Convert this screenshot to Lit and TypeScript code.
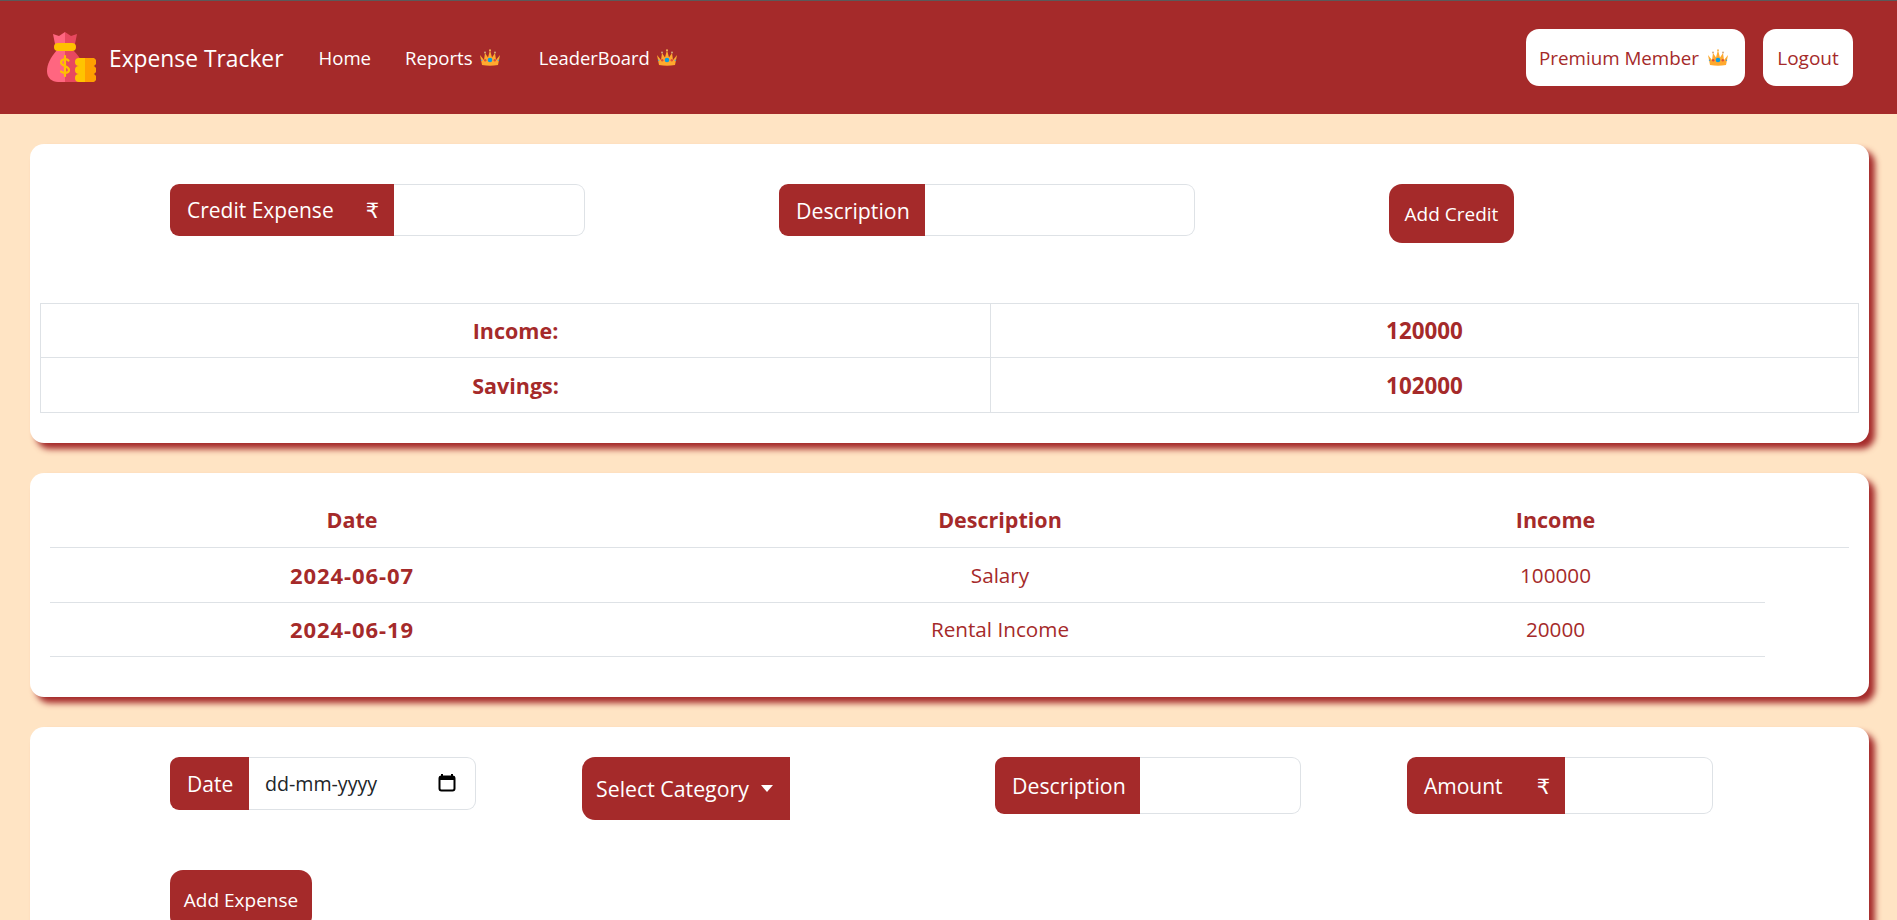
import { LitElement, html, css, svg } from "lit";
import { customElement } from "lit/decorators.js";

const crown = html`<svg class="crown" viewBox="0 0 22 17" aria-hidden="true">
  <path d="M1 6 L5 11 L6 4 L9 8.5 L11 1 L13 8.5 L16 4 L17 11 L21 6 L19 16 Q11 17.5 3 16 Z" fill="#ffa92e"/>
  <circle cx="11" cy="1.2" r="1" fill="#f5b75a"/><circle cx="6" cy="3.5" r="1" fill="#d6a878"/><circle cx="16" cy="3.5" r="1" fill="#d6a878"/>
  <circle cx="11" cy="11" r="2.3" fill="#0a9de0"/><circle cx="6.2" cy="11.2" r="1.2" fill="#e0503a"/><circle cx="15.8" cy="11.2" r="1.2" fill="#e0503a"/>
  <circle cx="2.6" cy="11.2" r=".8" fill="#4aa0c8"/><circle cx="19.4" cy="11.2" r=".8" fill="#4aa0c8"/>
</svg>`;

const logo = html`<svg class="logo" viewBox="0 0 50 50" aria-hidden="true">
  <path d="M19 0 L13 4 L7 2 L9 12 H19 Z" fill="#ff6680"/>
  <path d="M19 0 L25 4 L31 2 L29 12 H19 Z" fill="#e8485f"/>
  <path d="M19 18 H11 C4 26 1 33 1 39 C1 46 6 50 12 50 H19 Z" fill="#ff6680"/>
  <path d="M19 18 H27 C31 22 34 26 36 30 V50 H19 Z" fill="#e8485f"/>
  <rect x="8" y="11" width="22" height="8" rx="4" fill="#ffc000"/>
  <path d="M22.5 28.5 C21 26.5 15 26.5 15 30.5 C15 34.5 23 33.5 23 38 C23 41.5 17 41.5 15 39.5 M19 24 V44" fill="none" stroke="#ffc000" stroke-width="2.2" stroke-linecap="round"/>
  ${[26, 34, 42].map(
    (y) => svg`<rect x="29" y="${y}" width="21" height="8" rx="4" fill="#ffc400"/><path d="M39 ${y} H46 a4 4 0 0 1 0 8 H39 Z" fill="#ff9f00"/>`
  )}
</svg>`;

@customElement("app-root")
export class AppRoot extends LitElement {
  static styles = css`
    :host {
      display: block;
      height: 920px;
      overflow: hidden;
      background: bisque;
      color: #a52a2a;
      font-family: "Open Sans", "DejaVu Sans", sans-serif;
    }
    .nav {
      height: 113px;
      border-top: 1px solid #5a5a5a;
      background: #a52a2a;
      display: flex;
      align-items: center;
      color: #fff;
      padding: 0 44px 0 46px;
    }
    .logo { width: 50px; height: 50px; margin-top: -2px; flex: none; }
    .brand { font-size: 22.8px; margin-left: 13px; padding-top: 2px; }
    .link { font-size: 18.6px; display: flex; align-items: center; }
    .home { margin-left: 35px; }
    .reports { margin-left: 34px; }
    .reports .crown { margin-left: 6px; }
    .leader { margin-left: 38px; font-size: 18.4px; }
    .leader .crown { margin-left: 6px; }
    .crown { width: 22px; height: 17px; margin-left: 8px; flex: none; }
    .spacer { flex: 1; }
    .pill {
      height: 57px;
      background: #fff;
      color: #a52a2a;
      border-radius: 13px;
      display: flex;
      align-items: center;
      padding: 0 13px;
      font-size: 18.8px;
      margin-left: 18px;
    }
    .logout { font-size: 19px; width: 90px; padding: 0; justify-content: center; }
    .premium { width: 219px; box-sizing: border-box; }
    .main { padding: 30px 28px 0 30px; display: flex; flex-direction: column; gap: 30px; }
    .card {
      background: #fff;
      border-radius: 14px;
      box-shadow: 6px 6px 6px #a52a2a;
    }
    .c1 { padding: 40px 10px 0; height: 259px; }
    .c2 { padding: 20px 20px 0; height: 204px; }
    .c3 { padding: 30px 10px 0; height: 260px; }
    .row1 { display: grid; grid-template-columns: 609px 610px 1fr; padding-left: 130px; margin-bottom: 60px; align-items: start; }
    .row3 { display: grid; grid-template-columns: 412px 413px 412px 1fr; padding-left: 130px; align-items: start; margin-bottom: 50px; }
    .group {
      display: flex;
      align-items: stretch;
      border-radius: 9px;
    }
    .addon {
      background: #a52a2a;
      color: #fff;
      border-radius: 9px 0 0 9px;
      display: flex;
      align-items: center;
      padding-left: 17px;
      font-size: 21px;
      flex: none;
      box-sizing: border-box;
    }
    .rupee { margin-left: auto; margin-right: 15px; }
    .field {
      flex: 1;
      border: 1px solid #dee2e6;
      border-left: none;
      border-radius: 0 9px 9px 0;
      background: #fff;
      display: flex;
      align-items: center;
      justify-content: space-between;
      padding: 0 19px 0 16px;
      color: #212529;
      font-size: 19.6px;
    }
    .g-credit { width: 415px; height: 52px; }
    .g-credit .addon { width: 224px; }
    .g-desc { width: 416px; height: 52px; }
    .g-desc .addon { width: 146px; font-size: 21.3px; }
    .g-date { width: 306px; height: 53px; }
    .g-date .addon { width: 79px; }
    .g-desc2 { width: 306px; height: 57px; }
    .g-desc2 .addon { width: 145px; font-size: 21.3px; }
    .g-amount { width: 306px; height: 57px; }
    .g-amount .addon { width: 158px; }
    .cal { width: 18px; height: 19px; margin-top: -2px; }
    .btn {
      background: #a52a2a;
      color: #fff;
      border-radius: 13px;
      height: 59px;
      display: flex;
      align-items: center;
      justify-content: center;
      font-size: 19px;
      box-sizing: border-box;
    }
    .b-credit { width: 125px; }
    .b-expense { width: 142px; margin-left: 130px; padding-top: 1px; }
    .select {
      width: 208px;
      height: 63px;
      background: #a52a2a;
      color: #fff;
      border-radius: 13px 0 0 13px;
      display: flex;
      align-items: center;
      padding-left: 14px;
      box-sizing: border-box;
      font-size: 21.3px;
      white-space: nowrap;
    }
    .caret {
      width: 0;
      height: 0;
      border-left: 6px solid transparent;
      border-right: 6px solid transparent;
      border-top: 7px solid #fff;
      margin-left: 12px;
    }
    table { border-collapse: collapse; table-layout: fixed; }
    td, th { text-align: center; padding: 0; color: #a52a2a; box-sizing: border-box; }
    .sum { width: 1818px; font-size: 21.5px; font-weight: 700; }
    .sum td { border: 1px solid #dee2e6; height: 54px; }
    .sum tr + tr td { height: 55px; }
    .sum td.v { font-size: 22.4px; }
    .list { width: 1799px; font-size: 20.7px; }
    .list th { height: 54px; }
    .list td { height: 55px; }
    .list tr.last td { height: 54px; }
    .list th, .list td { border-bottom: 1px solid #dee2e6; }
    .list th { font-weight: 700; font-size: 21.5px; }
    .list td.d { font-weight: 700; font-size: 22px; letter-spacing: 0.9px; }
  `;

  render() {
    return html`
      <nav class="nav">
        ${logo}
        <span class="brand">Expense Tracker</span>
        <span class="link home">Home</span>
        <span class="link reports">Reports ${crown}</span>
        <span class="link leader">LeaderBoard ${crown}</span>
        <span class="spacer"></span>
        <span class="pill premium">Premium Member ${crown}</span>
        <span class="pill logout">Logout</span>
      </nav>
      <div class="main">
        <section class="card c1">
          <div class="row1">
            <div class="group g-credit">
              <span class="addon">Credit Expense<span class="rupee">₹</span></span>
              <span class="field"></span>
            </div>
            <div class="group g-desc">
              <span class="addon">Description</span>
              <span class="field"></span>
            </div>
            <div class="btn b-credit">Add Credit</div>
          </div>
          <table class="sum">
            <colgroup><col style="width:950px" /><col style="width:868px" /></colgroup>
            <tr><td>Income:</td><td class="v">120000</td></tr>
            <tr><td>Savings:</td><td class="v">102000</td></tr>
          </table>
        </section>
        <section class="card c2">
          <table class="list">
            <colgroup>
              <col style="width:604px" /><col style="width:692px" /><col style="width:419px" /><col style="width:84px" />
            </colgroup>
            <tr><th>Date</th><th>Description</th><th>Income</th><th></th></tr>
            <tr><td class="d">2024-06-07</td><td>Salary</td><td>100000</td></tr>
            <tr class="last"><td class="d">2024-06-19</td><td>Rental Income</td><td>20000</td></tr>
          </table>
        </section>
        <section class="card c3">
          <div class="row3">
            <div class="group g-date">
              <span class="addon">Date</span>
              <span class="field">dd-mm-yyyy
                <svg class="cal" viewBox="0 0 18 19" aria-hidden="true">
                  <path d="M4 1 V4 M14 1 V4" stroke="#000" stroke-width="2" />
                  <rect x="1.5" y="3.5" width="15" height="14" rx="2" fill="none" stroke="#000" stroke-width="2" />
                  <rect x="1.5" y="3.5" width="15" height="3.5" fill="#000" />
                </svg>
              </span>
            </div>
            <div class="select">Select Category<span class="caret"></span></div>
            <div class="group g-desc2">
              <span class="addon">Description</span>
              <span class="field"></span>
            </div>
            <div class="group g-amount">
              <span class="addon">Amount<span class="rupee">₹</span></span>
              <span class="field"></span>
            </div>
          </div>
          <div class="btn b-expense">Add Expense</div>
        </section>
      </div>
    `;
  }
}
